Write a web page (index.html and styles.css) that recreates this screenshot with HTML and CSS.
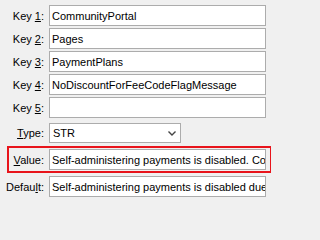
FILE: index.html
```html
<!DOCTYPE html>
<html>
<head>
<meta charset="utf-8">
<link rel="stylesheet" href="styles.css">
</head>
<body>
<form class="form">
  <div class="row key"><label class="lbl">Key <u>1</u>:</label><input class="field" type="text" value="CommunityPortal"></div>
  <div class="row key"><label class="lbl">Key <u>2</u>:</label><input class="field" type="text" value="Pages"></div>
  <div class="row key"><label class="lbl">Key <u>3</u>:</label><input class="field" type="text" value="PaymentPlans"></div>
  <div class="row key"><label class="lbl">Key <u>4</u>:</label><input class="field" type="text" value="NoDiscountForFeeCodeFlagMessage"></div>
  <div class="row key"><label class="lbl">Key <u>5</u>:</label><input class="field" type="text" value=""></div>
  <div class="row type"><label class="lbl"><u>T</u>ype:</label>
    <div class="combo"><span>STR</span>
      <svg class="chev" width="8" height="5" viewBox="0 0 8 5"><path d="M0.5 0.5 L4 4 L7.5 0.5" fill="none" stroke="#444" stroke-width="1.4"/></svg>
    </div>
  </div>
  <div class="row value"><label class="lbl"><u>V</u>alue:</label><input class="field" type="text" value="Self-administering payments is disabled. Contact your administrator."></div>
  <div class="row def"><label class="lbl">Defau<u>l</u>t:</label><input class="field" type="text" value="Self-administering payments is disabled due to fee code flags."></div>
</form>
</body>
</html>
```
FILE: styles.css
```css
html, body {
  margin: 0;
  padding: 0;
  background: #f0f0f0;
  width: 271px;
  height: 202px;
  overflow: hidden;
}
.form {
  display: flex;
  flex-direction: column;
  padding-top: 5px;
  font-family: "Liberation Sans", Arial, sans-serif;
  font-size: 11px;
  color: #000;
}
.row {
  display: grid;
  grid-template-columns: 44px 217px;
  column-gap: 5px;
  align-items: center;
}
.key { margin-bottom: 2px; }
.key:nth-child(5) { margin-bottom: 5px; }
.lbl {
  text-align: right;
  white-space: nowrap;
}
.field {
  box-sizing: border-box;
  height: 21px;
  width: 217px;
  margin: 0;
  padding: 0 0 0 2px;
  border: 1px solid #acacac;
  background: #fff;
  font: inherit;
  color: #000;
  outline: none;
}
.combo {
  box-sizing: border-box;
  height: 20px;
  width: 132px;
  border: 1px solid #acacac;
  background: #fff;
  display: flex;
  align-items: center;
  justify-content: space-between;
  padding: 0 4px 0 3px;
}
.type { margin-bottom: 3px; }
.value {
  margin-left: 7px;
  width: 259px;
  border: 2px solid #e8141b;
  padding: 1px 2px 1px 0;
  grid-template-columns: 35px 217px;
  margin-bottom: 3px;
}
```
